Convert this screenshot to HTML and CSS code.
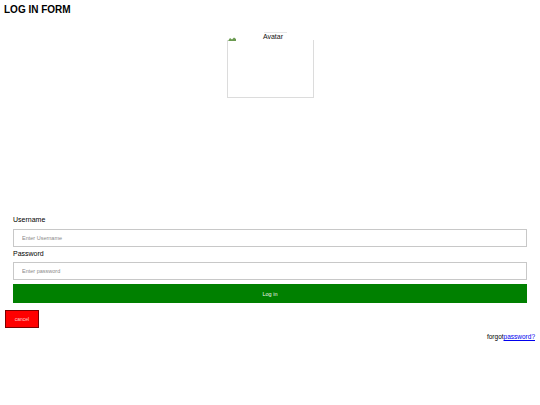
FILE: index.html
```html
<!DOCTYPE html>
<html>
<head>
<meta charset="utf-8">
<link rel="stylesheet" href="styles.css">
</head>
<body>
<h1 class="title">LOG IN FORM</h1>
<div class="avatar-row">
  <div class="avatar">
    <svg class="broken" width="8" height="4" viewBox="0 0 8 4"><path d="M0 4 L2 1 L4 2.5 L6 0.5 L8 2 L8 4 Z" fill="#6a9a50"/></svg>
    <span class="alt">Avatar</span>
  </div>
</div>
<form class="form">
  <label class="lbl">Username</label>
  <input class="field" type="text" placeholder="Enter Username">
  <label class="lbl lbl-2">Password</label>
  <input class="field" type="password" placeholder="Enter password">
  <button class="login" type="button">Log in</button>
</form>
<div class="bottom">
  <button class="cancel" type="button">cancel</button>
  <p class="forgot">forgot<a href="#">password?</a></p>
</div>
</body>
</html>
```

FILE: styles.css
```css
html, body {
  margin: 0;
  padding: 0;
  background: #fff;
  font-family: "Liberation Sans", Arial, sans-serif;
  color: #000;
}
body {
  padding: 4px 5px 0 4px;
}
.title {
  margin: 0;
  font-size: 10px;
  line-height: 12px;
  font-weight: bold;
}
.avatar-row {
  display: flex;
  justify-content: center;
  margin-top: 24px;
  padding-left: 1px;
  height: 175px;
}
.avatar {
  position: relative;
  width: 85px;
  height: 57px;
  border: 1px solid #dcdcdc;
  border-top: none;
}
.broken {
  position: absolute;
  left: 0;
  top: -3px;
}
.alt {
  position: absolute;
  left: 6px;
  right: 0;
  top: -7px;
  text-align: center;
  font-size: 7px;
  line-height: 8px;
  color: #111;
}
.alt::before {
  content: "";
  position: absolute;
  left: 30px;
  width: 23px;
  top: -1px;
  border-top: 1px solid #e6e6e6;
}
.form {
  display: flex;
  flex-direction: column;
  padding: 0 8px 0 9px;
  margin: 0;
}
.lbl {
  font-size: 7px;
  line-height: 9px;
  margin-bottom: 5px;
}
.lbl-2 {
  margin-top: 2px;
  margin-bottom: 4px;
}
.field {
  box-sizing: border-box;
  height: 18px;
  width: 100%;
  margin: 0;
  border: 1px solid #c8c8c8;
  padding: 0 0 0 8px;
  font-family: "Liberation Sans", Arial, sans-serif;
  font-size: 5.5px;
  outline: none;
}
.field::placeholder {
  color: #8a8a8a;
}
.login {
  margin-top: 4px;
  height: 19px;
  width: 100%;
  border: none;
  background: #008000;
  color: #e8f3e8;
  font-family: "Liberation Sans", Arial, sans-serif;
  font-size: 5.5px;
  padding: 0;
}
.bottom {
  display: flex;
  flex-direction: column;
  padding-left: 1px;
  margin-top: 7px;
}
.cancel {
  align-self: flex-start;
  width: 34px;
  height: 18px;
  margin: 0;
  padding: 0;
  background: #ff0000;
  border: 1px solid #7a0000;
  color: #ffd0d0;
  font-family: "Liberation Sans", Arial, sans-serif;
  font-size: 5px;
}
.forgot {
  margin: 4px 0 0;
  text-align: right;
  font-size: 6.5px;
  line-height: 9px;
}
.forgot a {
  color: #0000ee;
}
```
